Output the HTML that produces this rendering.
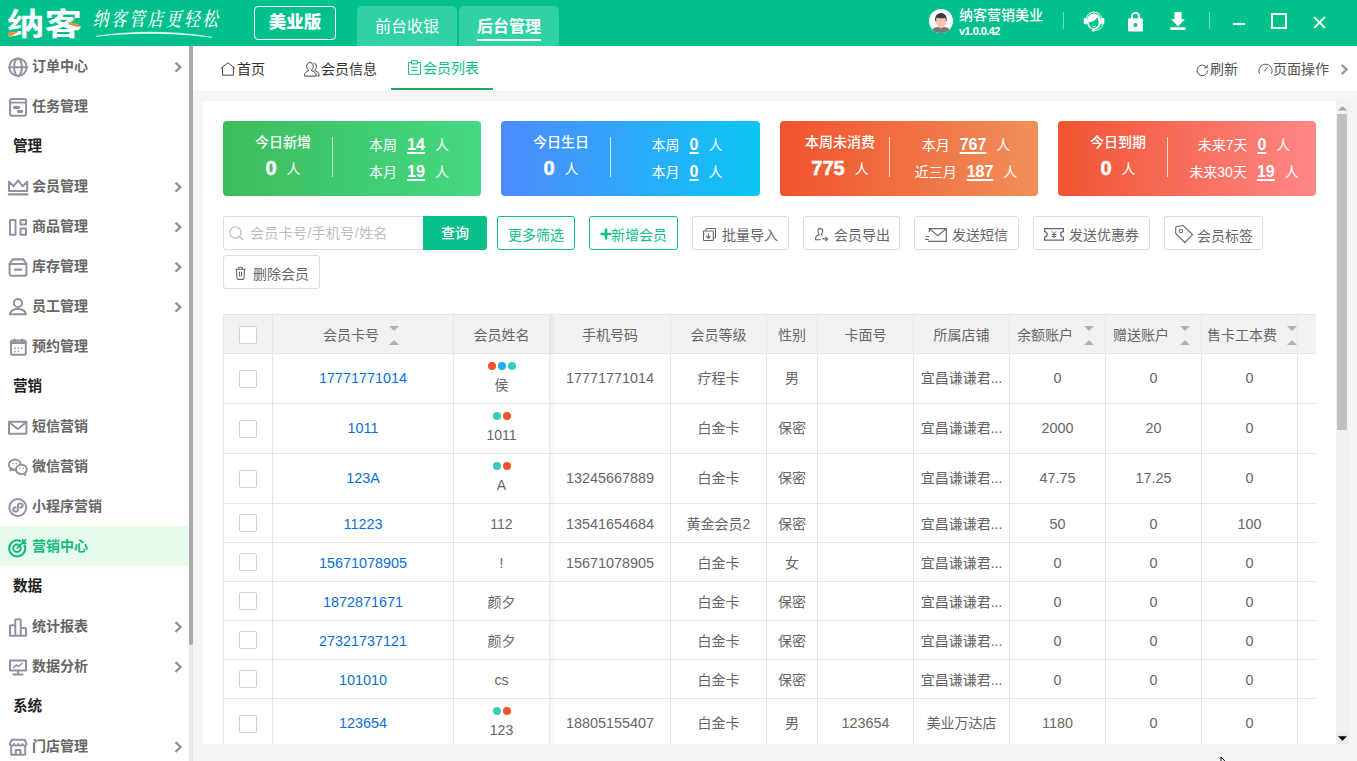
<!DOCTYPE html>
<html lang="zh-CN">
<head>
<meta charset="utf-8">
<title>纳客营销美业 - 会员列表</title>
<style>
*{box-sizing:border-box;margin:0;padding:0}
html,body{width:1357px;height:761px;overflow:hidden;background:#f5f5f5}
body{font-family:"Liberation Sans","Noto Sans CJK SC",sans-serif;font-size:14px;color:#666;position:relative}
.abs{position:absolute}
svg{display:block;overflow:visible}

/* ---------- top header ---------- */
#hdr{position:absolute;left:0;top:0;width:1357px;height:46px;background:#00c08b;color:#fff}
#logo{position:absolute;left:7px;top:7px;font-size:36px;line-height:40px;font-weight:700;letter-spacing:0;color:#fff;white-space:nowrap;transform-origin:0 0;transform:scale(1.04,.86)}
#slogan{position:absolute;left:91px;top:11px;font-size:16px;line-height:24px;color:#fff;font-family:"Liberation Serif","Noto Serif CJK SC",serif;font-weight:500;white-space:nowrap;letter-spacing:2.8px;transform:skewX(-12deg) scale(.97,1.22);transform-origin:0 100%}
#ver{position:absolute;left:254px;top:6px;width:82px;height:34px;border:1px solid #fff;border-radius:4px;font-size:17.5px;font-weight:900;line-height:31px;text-align:center;color:#fff}
.toptab{position:absolute;top:6px;height:40px;width:100px;background:#30d1a5;border-radius:5px 5px 0 0;font-size:16px;line-height:41px;text-align:center;color:#fff}
#tt1{left:357px}
#tt2{left:459px;font-weight:700}
#tt2 i{position:absolute;left:18px;right:18px;top:33px;height:2px;background:#fff}
#uname{position:absolute;left:959px;top:6px;font-size:14px;line-height:18px;font-weight:500;white-space:nowrap}
#uver{position:absolute;left:959px;top:24px;font-size:11px;line-height:14px;font-weight:700;white-space:nowrap;letter-spacing:-.55px}
.vsep{position:absolute;top:12px;width:1px;height:17px;background:rgba(255,255,255,.45)}

/* ---------- sidebar ---------- */
#side{position:absolute;left:0;top:46px;width:189px;height:715px;background:#fff;overflow:hidden}
#sbar{position:absolute;left:189px;top:46px;width:4px;height:715px;background:#e8e8e8}
#sbar i{position:absolute;left:0;top:0;width:4px;height:599px;background:#a9a8ab;border-radius:0 0 2px 2px}
.mi{position:absolute;left:0;width:189px;height:40px;line-height:40px;font-size:14px;font-weight:700;color:#666;padding-left:32px;white-space:nowrap}
.mi svg{position:absolute;left:8px;top:10px;width:20px;height:20px;stroke:#9391a1;fill:none;stroke-width:2;stroke-linecap:round;stroke-linejoin:round}
.mi .chev{left:173px;top:15px;width:10px;height:12px;stroke-width:2.3;stroke-linecap:butt;stroke-linejoin:miter}
.mi.on{background:#e6fceb;color:#10b981}
.mi.on svg{stroke:#10b981;top:11px}
.mt{position:absolute;left:13px;width:160px;height:40px;line-height:40px;font-size:14.6px;font-weight:700;color:#222}

/* ---------- page tabs ---------- */
#tabs{position:absolute;left:193px;top:46px;width:1164px;height:45px;background:#fff}
.pt{position:absolute;top:0;height:45px;line-height:46px;font-size:14px;color:#333;white-space:nowrap}
.pt svg{position:absolute;top:15px;stroke:#444;fill:none;stroke-width:1}
.pt.on{color:#04bf88}
.pt.on svg{stroke:#04bf88}
#ptline{position:absolute;left:198px;top:42px;width:102px;height:2px;background:#21ab5e}

/* ---------- main card ---------- */
#card{position:absolute;left:203px;top:101px;width:1133px;height:643px;background:#fff;border-radius:2px 0 0 0;overflow:hidden}
#vtrack{position:absolute;left:1336px;top:101px;width:13px;height:643px;background:#f1f1f1}
#vthumb{position:absolute;left:1px;top:13px;width:10px;height:316px;background:#c1c1c1}

/* ---------- stat cards ---------- */
.st{position:absolute;top:20px;height:75px;width:258px;border-radius:4px;color:#fff;font-size:14px}
.st .l{position:absolute;left:10px;top:0;width:100px;text-align:center;white-space:nowrap}
.st .l .t{position:absolute;left:-20px;right:-20px;top:11px;line-height:20px;font-weight:500}
.st .l .n{position:absolute;left:-20px;right:-20px;top:33px;line-height:28px}
.st .l .n b{font-size:20px;font-weight:700;margin-right:10px;vertical-align:-1px;-webkit-text-stroke:.5px #fff}
.st .dv{position:absolute;left:109px;top:16px;width:1px;height:40px;background:rgba(255,255,255,.75)}
.st .r{position:absolute;left:100px;width:172px;text-align:center;white-space:nowrap;line-height:26px;height:26px}
.st .r1{top:11px}
.st .r2{top:38px}
.st .r b{font-size:16px;font-weight:700;margin:0 10px;text-decoration:underline;text-underline-offset:1.5px;text-decoration-thickness:1.5px}
/* ---------- toolbar ---------- */
.btn{position:absolute;top:115px;height:34px;border:1px solid #dcdcdc;border-radius:3px;background:#fff;color:#666;font-size:14px;line-height:32px;white-space:nowrap}
.btn span{position:absolute;top:2px}
.btn svg{position:absolute;stroke:#666;fill:none;stroke-width:1.1}
.btn.g{border-color:#0dbf8c;color:#0dbf8c}
#q{position:absolute;left:20px;top:115px;width:200px;height:34px;border:1px solid #dcdcdc;border-right:0;border-radius:3px 0 0 3px;background:#fff;color:#bdbdbd;font-size:14px;line-height:32px;padding-left:26px;white-space:nowrap;letter-spacing:.35px}
#q svg{position:absolute;left:5px;top:9px;width:15px;height:15px;stroke:#c4c4c4;fill:none;stroke-width:1.4}
#qb{position:absolute;left:220px;top:115px;width:64px;height:34px;background:#08bf8b;border-radius:0 3px 3px 0;color:#fff;font-size:14px;font-weight:500;line-height:35px;text-align:center}

/* ---------- table ---------- */
#tb{position:absolute;left:20px;top:213px;width:1093px;height:440px;border-left:1px solid #e6e6e6;border-top:1px solid #e6e6e6;overflow:hidden;color:#666;font-size:14px}
.tr{display:flex;width:1200px}
.tr>div{flex:none;position:relative;border-right:1px solid #e6e6e6;border-bottom:1px solid #e6e6e6;text-align:center;white-space:nowrap;overflow:hidden}
.th>div{background:#f2f2f2}
.h39{height:39px;line-height:40px}
.th.h39{line-height:41px}
.h50{height:50px;line-height:49px}
.c0{width:49px}.c1{width:181px}.c2{width:96px}.c3{width:121px}.c4{width:96px}.c5{width:51px}.c6{width:96px}.c7{width:96px}.c8{width:96px}.c9{width:96px}.c10{width:96px}.c11{width:60px}
.cb{position:absolute;left:15px;width:18px;height:18px;border:1px solid #d2d2d2;border-radius:2px;background:#fff}
.h39 .cb{top:10px}
.h50 .cb{top:16px}
.th .cb{top:11px}
.c1 a{color:#0a6fd8;text-decoration:none}
.tr:not(.th) .c1,.tr:not(.th) .c3,.tr:not(.th) .c6,.tr:not(.th) .c8,.tr:not(.th) .c9,.tr:not(.th) .c10{font-size:14.4px}
.so{position:absolute;top:0;width:10px;height:38px}
.so:before,.so:after{content:"";position:absolute;left:0;border-left:5px solid transparent;border-right:5px solid transparent}
.so:before{top:11px;border-top:5px solid #b2b2b2}
.so:after{top:24.500px;border-bottom:5px solid #b2b2b2}
.dots{position:absolute;left:0;right:0;top:8px;height:8px;line-height:0;font-size:0}
.dots i{display:inline-block;width:8px;height:8px;border-radius:50%;margin:0 1px}
.dr{background:#f4542d}.db{background:#1ab0f6}.dt{background:#38cdb8}
.nm{position:absolute;left:0;right:0;top:20px;line-height:22px}
#fsh{position:absolute;left:326px;top:0;width:6px;height:440px;background:linear-gradient(90deg,rgba(0,0,0,.05),rgba(0,0,0,0))}
.thl{text-align:left!important}
</style>
</head>
<body>

<!-- ================= HEADER ================= -->
<div id="hdr">
  <div id="logo">纳客</div>
  <div id="slogan">纳客管店更轻松</div>
  <svg class="abs" style="left:94px;top:30px;width:120px;height:9px" viewBox="0 0 120 9"><path d="M2 6.400C30 1.200 80 0 118 7.400 80 1.800 30 2.800 2 6.400Z" fill="#fff" stroke="#fff" stroke-width=".500"/></svg>
  <svg class="abs" style="left:6px;top:20px;width:76px;height:18px" viewBox="0 0 76 18"><path d="M2 12.600c3-.200 6.500-1 10.200-.900-2.600 1.900-6 4.200-9.300 5.100C2 15.500 1.800 14 2 12.600Z" fill="#f58f3e"/><path d="M61 1.800c4 .800 8.600 1.600 12.200 2.200.300 1.100 0 2.400-.900 3.300C68 6.500 64 4.600 61 1.800Z" fill="#f58f3e"/></svg>
  <div id="ver">美业版</div>
  <div class="toptab" id="tt1">前台收银</div>
  <div class="toptab" id="tt2">后台管理<i></i></div>
  <div id="uname">纳客营销美业</div>
  <div id="uver">v1.0.0.42</div>
  <div class="vsep" style="left:1063px"></div>
  <div class="vsep" style="left:1209px"></div>
  <!-- avatar -->
  <svg class="abs" style="left:929px;top:9px;width:24px;height:24px" viewBox="0 0 24 24">
    <defs><clipPath id="avc"><circle cx="12" cy="12" r="12"/></clipPath></defs>
    <circle cx="12" cy="12" r="12" fill="#fff"/>
    <g clip-path="url(#avc)">
      <path d="M3.600 24v-2.600c0-2 2.200-3.100 5.600-3.300l2.800.900 2.800-.900c3.400.200 5.600 1.300 5.600 3.300V24Z" fill="#777"/>
      <path d="M10.300 15.500h3.400v3.100l-1.700.900-1.700-.900Z" fill="#f4b19d"/>
      <ellipse cx="12" cy="13" rx="5.100" ry="5.300" fill="#f9c0ae"/>
      <path d="M6.300 12.400C5.400 7.600 7.700 4 12.100 4c4.300 0 6.200 3.600 5.400 8.400l-.700-.400c.100-1.300-.300-2.400-.800-3.100-2.400.700-5.800.600-8.200-.200-.400.800-.700 2-.600 3.300Z" fill="#3a3a3a"/>
    </g>
  </svg>
  <!-- headset -->
  <svg class="abs" style="left:1083px;top:10px;width:22px;height:22px" viewBox="0 0 22 22">
    <path d="M3.400 8.200A7.800 7.800 0 0 1 18.600 8.200" fill="none" stroke="#fff" stroke-width="1"/>
    <path d="M4 12.200C3.600 6.800 7 3.600 11 3.600s7.400 3.200 7 8.600c-.200 4.400-3.400 7-7 7s-6.800-2.600-7-7Z" fill="#fff"/>
    <path d="M5.600 12.400c2.600-.400 6-1 7.900-4.100.400-.700 1.100-.500 1.300.300.500 1.500.900 3.100.800 4.500-.300 3.200-2.400 5.100-4.700 5.100-2.600 0-5-2.300-5.300-5.800Z" fill="#00c08b"/>
    <path d="M9.200 15.900c1.100 1 2.600 1 3.700 0" fill="none" stroke="#fff" stroke-width=".800" stroke-linecap="round"/>
    <rect x=".700" y="8" width="3.200" height="6.200" rx="1.200" fill="#fff"/>
    <rect x="18.100" y="8" width="3.200" height="6.200" rx="1.200" fill="#fff"/>
    <path d="M19.700 13.800c0 4-4 6.400-8.300 6.500" fill="none" stroke="#fff" stroke-width="1"/>
    <ellipse cx="10.600" cy="20.300" rx="1.700" ry="1.200" fill="#fff"/>
  </svg>
  <!-- lock -->
  <svg class="abs" style="left:1127px;top:11px;width:17px;height:21px" viewBox="0 0 17 21">
    <path d="M4.900 8V5.400a3.600 3.600 0 0 1 7.200 0V8" fill="none" stroke="#fff" stroke-width="1.700"/>
    <rect x="1" y="7.300" width="15" height="13.100" rx="1.200" fill="#fff"/>
    <circle cx="8.500" cy="13.900" r="2" fill="#00c08b"/>
  </svg>
  <!-- download -->
  <svg class="abs" style="left:1170px;top:11px;width:16px;height:20px" viewBox="0 0 16 20">
    <path d="M4.400 1.800a.800.800 0 0 1 .800-.800h5.600a.800.800 0 0 1 .800.800V8.300h3.300L8 15.400 1.100 8.300h3.300Z" fill="#fff"/>
    <path d="M1.500 17.700h13" stroke="#fff" stroke-width="2.800" stroke-linecap="round"/>
  </svg>
  <!-- window controls -->
  <div class="abs" style="left:1233px;top:23px;width:12px;height:2px;background:#fff"></div>
  <div class="abs" style="left:1271px;top:13px;width:16px;height:16px;border:2px solid #fffef0"></div>
  <svg class="abs" style="left:1313px;top:16px;width:13px;height:13px" viewBox="0 0 13 13"><path d="M1.200 1.200 11.800 11.800M11.800 1.200 1.200 11.800" stroke="#fff" stroke-width="1.900"/></svg>
</div>

<!-- ================= SIDEBAR ================= -->
<div id="side">
  <div class="mi" style="top:0">订单中心
    <svg viewBox="0 0 20 20"><circle cx="10" cy="11.2" r="8.7"/><ellipse cx="10" cy="11.2" rx="3.9" ry="8.7"/><path d="M1.3 11.2h17.4"/></svg>
    <svg class="chev" viewBox="0 0 10 12"><path d="M2.5 1.7 L7.4 6.2 L2.5 10.7"/></svg>
  </div>
  <div class="mi" style="top:40px">任务管理
    <svg viewBox="0 0 20 20"><rect x="2.100" y="2.900" width="16" height="16.900" rx="1.800"/><path d="M2.100 6.700h16" stroke-width="1.800"/><path d="M6.300 11.500h4.600M10.300 15.500h3.600" stroke-width="2.800"/></svg>
  </div>
  <div class="mt" style="top:80px">管理</div>
  <div class="mi" style="top:120px">会员管理
    <svg viewBox="0 0 20 20"><path d="M1 5.8V15h18.2V5.8l-4.6 4.4L10.1 4.4 5.6 10.2Z"/><path d="M0.8 18.4h18.6" stroke-width="2.2"/></svg>
    <svg class="chev" viewBox="0 0 10 12"><path d="M2.5 1.7 L7.4 6.2 L2.5 10.7"/></svg>
  </div>
  <div class="mi" style="top:160px">商品管理
    <svg viewBox="0 0 20 20"><rect x="2" y="4.1" width="5.5" height="14.6"/><rect x="12.5" y="4.1" width="5.5" height="4.4"/><rect x="12.5" y="12.4" width="5.5" height="6.3"/></svg>
    <svg class="chev" viewBox="0 0 10 12"><path d="M2.5 1.7 L7.4 6.2 L2.5 10.7"/></svg>
  </div>
  <div class="mi" style="top:200px">库存管理
    <svg viewBox="0 0 20 20"><path d="M5 3.4h10" stroke-width="2.4"/><path d="M4.4 3.6 1.6 7.8v9.9a2 2 0 0 0 2 2h12.8a2 2 0 0 0 2-2V7.8l-2.8-4.2"/><path d="M1.6 8h16.8"/><path d="M7 13.6h6" stroke-width="2.4"/></svg>
    <svg class="chev" viewBox="0 0 10 12"><path d="M2.5 1.7 L7.4 6.2 L2.5 10.7"/></svg>
  </div>
  <div class="mi" style="top:240px">员工管理
    <svg viewBox="0 0 20 20"><circle cx="9.9" cy="7" r="4.1"/><path d="M1.8 18.2c1-3.6 3.9-5.2 8.1-5.2s7.100 1.600 8.100 5.200Z"/></svg>
    <svg class="chev" viewBox="0 0 10 12"><path d="M2.5 1.7 L7.4 6.2 L2.5 10.7"/></svg>
  </div>
  <div class="mi" style="top:280px">预约管理
    <svg viewBox="0 0 20 20"><rect x="3" y="4.600" width="14.800" height="14.200" rx="1.500"/><path d="M3 6.800h14.800" stroke-width="2.600"/><path d="M6.600 3.400v2M14.200 3.400v2" stroke-width="2"/><path d="M6.300 12.200h1.400M9.700 12.200h1.400M13.100 12.200h1.400M6.300 15.500h1.400M9.700 15.500h1.400" stroke-width="1.600" stroke-linecap="butt"/></svg>
  </div>
  <div class="mt" style="top:320px">营销</div>
  <div class="mi" style="top:360px">短信营销
    <svg viewBox="0 0 20 20"><rect x="1" y="5.800" width="17.400" height="12"/><path d="M1.200 6.200 9.700 13l8.500-6.800"/></svg>
  </div>
  <div class="mi" style="top:400px">微信营销
    <svg viewBox="0 0 20 20" stroke-width="1.300" style="top:11px"><path d="M7.600 12.700a5.900 5.100 0 1 1 4.900-6.300"/><path d="M7.600 12.700c-1.200.2-2.300 0-3.100-.4L2.300 13.400l.6-2.100"/><path d="M13.400 7.800c3 0 5.400 2.100 5.400 4.700 0 1.500-.8 2.800-2 3.700l.4 1.700-1.900-1c-.6.200-1.200.3-1.900.3-3 0-5.400-2.100-5.400-4.700s2.400-4.700 5.400-4.700Z"/><path d="M4.800 6.600h.1M8.200 6.600h.1M11.600 11.300h.1M15.100 11.300h.1" stroke-width="1.500"/></svg>
  </div>
  <div class="mi" style="top:440px">小程序营销
    <svg viewBox="0 0 20 20" stroke-width="1.400"><circle cx="9.800" cy="11.500" r="8.400"/><path d="M9.900 13.500a2.350 2.100 0 1 1-2.350-2.100M9.900 13.500V9.500a2.350 2.100 0 1 1 2.350 2.100"/></svg>
  </div>
  <div class="mi on" style="top:480px">营销中心
    <svg viewBox="0 0 20 20" stroke-width="2.100"><path d="M16.500 8.200a8 8 0 1 1-4.300-4.200"/><circle cx="9" cy="11.300" r="3.700"/><path d="M9.200 11.100 17.600 2.900M14.600 2.900l.2 3 3 .2" stroke-width="1.800"/></svg>
  </div>
  <div class="mt" style="top:520px">数据</div>
  <div class="mi" style="top:560px">统计报表
    <svg viewBox="0 0 20 20"><path d="M2 19.700V10.200a1 1 0 0 1 1-1h4.300M7.300 19.700V4.200a1 1 0 0 1 1-1h3.400a1 1 0 0 1 1 1V19.700M12.700 12h4.300a1 1 0 0 1 1 1v6.700M1.800 19.700h16.400"/></svg>
    <svg class="chev" viewBox="0 0 10 12"><path d="M2.500 1.200 L7.600 6 L2.500 10.800"/></svg>
  </div>
  <div class="mi" style="top:600px">数据分析
    <svg viewBox="0 0 20 20"><rect x="2" y="4.400" width="16" height="10.200"/><path d="M10 14.600v3.600M5.400 18.400h9.200" /><path d="M5.600 11.700 8.400 8.700l2.200 1.900 3.600-3.400" stroke-width="1.400"/></svg>
    <svg class="chev" viewBox="0 0 10 12"><path d="M2.500 1.200 L7.600 6 L2.500 10.800"/></svg>
  </div>
  <div class="mt" style="top:640px">系统</div>
  <div class="mi" style="top:680px">门店管理
    <svg viewBox="0 0 20 20"><path d="M3.800 3.800h12.800l2 4.200a2.150 2.150 0 0 1-4.200 0a2.150 2.150 0 0 1-4.200 0a2.150 2.150 0 0 1-4.200 0a2.150 2.150 0 0 1-4.200 0Z"/><path d="M3.200 10.500v8.300h14v-8.300M7.800 18.800v-4.900h4.600v4.900"/></svg>
    <svg class="chev" viewBox="0 0 10 12"><path d="M2.500 1.200 L7.600 6 L2.500 10.800"/></svg>
  </div>
</div>
<div id="sbar"><i></i></div>

<!-- ================= PAGE TABS ================= -->
<div id="tabs">
  <div class="pt" style="left:44px">首页
    <svg style="left:-17px;top:16px;width:16px;height:14px" viewBox="0 0 16 14"><path d="M0.800 6.400 8 0.800l7.200 5.600M2.600 5.200v8h10.800v-8"/></svg>
  </div>
  <div class="pt" style="left:128px">会员信息
    <svg style="left:-17px;top:16px;width:16px;height:15px" viewBox="0 0 16 15"><path d="M6 0.600c2 0 3.300 1.500 3.300 3.700 0 1.700-.8 3-1.600 3.600v1c2.600.8 4.600 1.800 4.600 4.300v.9H.600v-.9c0-2.500 1.500-3.500 3.700-4.300v-1C3.500 7.300 2.700 6 2.700 4.300 2.700 2.100 4 .600 6 .600Z"/><path d="M9.600 1c1.700.1 2.800 1.500 2.800 3.500 0 1.600-.7 2.700-1.400 3.300v.9c2.300.8 4 1.700 4 4v1.400h-1.600"/></svg>
  </div>
  <div class="pt on" style="left:230px;line-height:44px">会员列表
    <svg style="left:-15px;top:14px;width:13px;height:15px" viewBox="0 0 13 15"><path d="M3.600 2.500H.600v11.800h11.800V2.500H9.400M3.600.700h5.800v3.200H3.600ZM3.400 7.300h6.200M3.400 10.400h6.200"/></svg>
  </div>
  <div id="ptline"></div>
  <div class="pt" style="left:1017px;color:#555">刷新
    <svg style="left:-14px;top:18px;width:13px;height:12px;stroke:#555" viewBox="0 0 13 12"><path d="M10.800 3.600A5.300 5.300 0 1 0 11.600 6.400M8.200 3.800h3V.800"/></svg>
  </div>
  <div class="pt" style="left:1080px;color:#555">页面操作
    <svg style="left:-15px;top:17px;width:15px;height:11px;stroke:#555" viewBox="0 0 15 11"><path d="M1.600 10.800A6.600 6.600 0 1 1 13.400 10.800M6.400 8.200 9.600 4.400"/></svg>
  </div>
  <svg class="abs" style="left:1147px;top:18px;width:9px;height:11px;stroke:#9997a6;fill:none;stroke-width:2.300" viewBox="0 0 9 11"><path d="M1.600 0.800 6.600 5.500 1.600 10.200"/></svg>
</div>

<!-- ================= MAIN CARD ================= -->
<div id="card">
  <!-- stat cards -->
  <div class="st" style="left:20px;background:linear-gradient(90deg,#3dbc5d,#44d982)">
    <div class="l"><div class="t">今日新增</div><div class="n"><b>0</b>人</div></div><div class="dv"></div>
    <div class="r r1">本周<b>14</b>人</div><div class="r r2">本月<b>19</b>人</div>
  </div>
  <div class="st" style="left:298px;width:259px;background:linear-gradient(90deg,#4e8afe,#0cc7f3)">
    <div class="l"><div class="t">今日生日</div><div class="n"><b>0</b>人</div></div><div class="dv"></div>
    <div class="r r1">本周<b>0</b>人</div><div class="r r2">本月<b>0</b>人</div>
  </div>
  <div class="st" style="left:577px;background:linear-gradient(90deg,#f0532f,#f08f5a)">
    <div class="l"><div class="t">本周未消费</div><div class="n"><b>775</b>人</div></div><div class="dv"></div>
    <div class="r r1">本月<b>767</b>人</div><div class="r r2">近三月<b>187</b>人</div>
  </div>
  <div class="st" style="left:855px;background:linear-gradient(90deg,#f05432,#ff8786)">
    <div class="l"><div class="t">今日到期</div><div class="n"><b>0</b>人</div></div><div class="dv"></div>
    <div class="r r1">未来7天<b>0</b>人</div><div class="r r2">未来30天<b>19</b>人</div>
  </div>

  <!-- toolbar -->
  <div id="q">会员卡号/手机号/姓名
    <svg viewBox="0 0 15 15"><circle cx="6.500" cy="6.500" r="5.600"/><path d="M10.600 10.600 14.300 14.300"/></svg>
  </div>
  <div id="qb">查询</div>
  <div class="btn g" style="left:294px;width:78px"><span style="left:10px">更多筛选</span></div>
  <div class="btn g" style="left:386px;width:89px"><span style="left:21px">新增会员</span>
    <svg style="left:10px;top:11px;width:12px;height:12px;stroke:#0dbf8c;stroke-width:2.600" viewBox="0 0 12 12"><path d="M6 .600v10.800M.600 6h10.800"/></svg>
  </div>
  <div class="btn" style="left:489px;width:97px"><span style="left:29px">批量导入</span>
    <svg style="left:10px;top:11px;width:13px;height:13px" viewBox="0 0 13 13"><path d="M3 2.700V1.300a.800.800 0 0 1 .800-.800h7.900a.800.800 0 0 1 .800.800v7.900a.800.800 0 0 1-.800.800h-1.400"/><rect x=".500" y="3" width="9.800" height="9.500" rx=".800"/><path d="M5.400 5.200v4.900M3.300 8.100l2.100 2.100 2.100-2.100"/></svg>
  </div>
  <div class="btn" style="left:600px;width:97px"><span style="left:30px">会员导出</span>
    <svg style="left:11px;top:11px;width:13px;height:13px" viewBox="0 0 13 13"><path d="M5.300.600c1.400 0 2.400 1.100 2.400 2.700 0 1.200-.600 2.200-1.200 2.600v.900l.900.400M4.100 5.900v.900C2.400 7.400.600 8.200.600 10.200v1.600h5.200M4.100 5.900C3.500 5.500 2.900 4.500 2.900 3.300 2.900 1.700 3.900.600 5.300.600M7.400 10.900h5.200M10.500 8.800l2.100 2.100-2.100 2.100"/></svg>
  </div>
  <div class="btn" style="left:711px;width:105px"><span style="left:37px">发送短信</span>
    <svg style="left:10px;top:11px;width:22px;height:14px" viewBox="0 0 22 14"><path d="M4.300 4V.600h17v12.800H3M4.600.900l8.200 6.800L21 .900M1 8.500h3.300M.300 11.300h3.400" stroke-width="1.200"/></svg>
  </div>
  <div class="btn" style="left:830px;width:117px"><span style="left:35px">发送优惠券</span>
    <svg style="left:10px;top:11px;width:20px;height:13px" viewBox="0 0 20 13"><path d="M.600.600h18.800v3a2.700 2.700 0 0 0 0 5.400v3.100H.600V9a2.700 2.700 0 0 0 0-5.400Z" stroke-width="1.200"/><path d="M7.900 3.300l2.100 2.600 2.100-2.600M10 5.900v4.200M7.600 6.500h4.800M7.600 8.400h4.800" stroke-width="1"/></svg>
  </div>
  <div class="btn" style="left:961px;width:99px"><span style="left:32px;top:3px">会员标签</span>
    <svg style="left:10px;top:8px;width:18px;height:18px" viewBox="0 0 18 18"><path d="M.700 2.800a1.300 1.300 0 0 1 1.100-1.300L8.200.500l9.300 9.100-7.600 8L.700 8.400Z"/><circle cx="5.900" cy="6" r="1.700"/></svg>
  </div>
  <div class="btn" style="left:20px;top:154px;width:97px"><span style="left:29px">删除会员</span>
    <svg style="left:11px;top:10px;width:11px;height:14px" viewBox="0 0 11 14"><path d="M.400 3.300h10.200M3.400 3.100c0-1.400.800-2.100 2.100-2.100s2.100.700 2.100 2.100M1.500 3.500l.500 8.600a1.300 1.300 0 0 0 1.300 1.300h4.400a1.300 1.300 0 0 0 1.300-1.300l.500-8.600M4.400 5.800l.200 4.700M6.600 5.800l-.200 4.700"/></svg>
  </div>
  <!-- table -->
  <div id="tb">
    <div class="tr th h39">
      <div class="c0"><i class="cb"></i></div>
      <div class="c1 thl"><span style="position:absolute;left:50px">会员卡号</span><i class="so" style="left:116px"></i></div>
      <div class="c2">会员姓名</div>
      <div class="c3">手机号码</div>
      <div class="c4">会员等级</div>
      <div class="c5">性别</div>
      <div class="c6">卡面号</div>
      <div class="c7">所属店铺</div>
      <div class="c8 thl"><span style="position:absolute;left:7px">余额账户</span><i class="so" style="left:74px"></i></div>
      <div class="c9 thl"><span style="position:absolute;left:7px">赠送账户</span><i class="so" style="left:74px"></i></div>
      <div class="c10 thl"><span style="position:absolute;left:5px">售卡工本费</span><i class="so" style="left:85px"></i></div>
      <div class="c11"></div>
    </div>
    <div class="tr h50">
      <div class="c0"><i class="cb"></i></div><div class="c1"><a>17771771014</a></div><div class="c2"><span class="dots"><i class="dr"></i><i class="db"></i><i class="dt"></i></span><span class="nm">侯</span></div><div class="c3">17771771014</div><div class="c4">疗程卡</div><div class="c5">男</div><div class="c6"></div><div class="c7">宜昌谦谦君...</div><div class="c8">0</div><div class="c9">0</div><div class="c10">0</div><div class="c11"></div>
    </div>
    <div class="tr h50">
      <div class="c0"><i class="cb"></i></div><div class="c1"><a>1011</a></div><div class="c2"><span class="dots"><i class="dt"></i><i class="dr"></i></span><span class="nm">1011</span></div><div class="c3"></div><div class="c4">白金卡</div><div class="c5">保密</div><div class="c6"></div><div class="c7">宜昌谦谦君...</div><div class="c8">2000</div><div class="c9">20</div><div class="c10">0</div><div class="c11"></div>
    </div>
    <div class="tr h50">
      <div class="c0"><i class="cb"></i></div><div class="c1"><a>123A</a></div><div class="c2"><span class="dots"><i class="dt"></i><i class="dr"></i></span><span class="nm">A</span></div><div class="c3">13245667889</div><div class="c4">白金卡</div><div class="c5">保密</div><div class="c6"></div><div class="c7">宜昌谦谦君...</div><div class="c8">47.75</div><div class="c9">17.25</div><div class="c10">0</div><div class="c11"></div>
    </div>
    <div class="tr h39">
      <div class="c0"><i class="cb"></i></div><div class="c1"><a>11223</a></div><div class="c2">112</div><div class="c3">13541654684</div><div class="c4">黄金会员2</div><div class="c5">保密</div><div class="c6"></div><div class="c7">宜昌谦谦君...</div><div class="c8">50</div><div class="c9">0</div><div class="c10">100</div><div class="c11"></div>
    </div>
    <div class="tr h39">
      <div class="c0"><i class="cb"></i></div><div class="c1"><a>15671078905</a></div><div class="c2">!</div><div class="c3">15671078905</div><div class="c4">白金卡</div><div class="c5">女</div><div class="c6"></div><div class="c7">宜昌谦谦君...</div><div class="c8">0</div><div class="c9">0</div><div class="c10">0</div><div class="c11"></div>
    </div>
    <div class="tr h39">
      <div class="c0"><i class="cb"></i></div><div class="c1"><a>1872871671</a></div><div class="c2">颜夕</div><div class="c3"></div><div class="c4">白金卡</div><div class="c5">保密</div><div class="c6"></div><div class="c7">宜昌谦谦君...</div><div class="c8">0</div><div class="c9">0</div><div class="c10">0</div><div class="c11"></div>
    </div>
    <div class="tr h39">
      <div class="c0"><i class="cb"></i></div><div class="c1"><a>27321737121</a></div><div class="c2">颜夕</div><div class="c3"></div><div class="c4">白金卡</div><div class="c5">保密</div><div class="c6"></div><div class="c7">宜昌谦谦君...</div><div class="c8">0</div><div class="c9">0</div><div class="c10">0</div><div class="c11"></div>
    </div>
    <div class="tr h39">
      <div class="c0"><i class="cb"></i></div><div class="c1"><a>101010</a></div><div class="c2">cs</div><div class="c3"></div><div class="c4">白金卡</div><div class="c5">保密</div><div class="c6"></div><div class="c7">宜昌谦谦君...</div><div class="c8">0</div><div class="c9">0</div><div class="c10">0</div><div class="c11"></div>
    </div>
    <div class="tr h50">
      <div class="c0"><i class="cb"></i></div><div class="c1"><a>123654</a></div><div class="c2"><span class="dots"><i class="dt"></i><i class="dr"></i></span><span class="nm">123</span></div><div class="c3">18805155407</div><div class="c4">白金卡</div><div class="c5">男</div><div class="c6">123654</div><div class="c7">美业万达店</div><div class="c8">1180</div><div class="c9">0</div><div class="c10">0</div><div class="c11"></div>
    </div>
    <div id="fsh"></div>
  </div>
</div>
<div id="vtrack"><div id="vthumb"></div>
  <svg class="abs" style="left:2px;top:5px;width:9px;height:5px" viewBox="0 0 9 5"><path d="M0 4.600 4.500.200 9 4.600Z" fill="#a3a3a3"/></svg>
  <div class="abs" style="left:0;top:631px;width:13px;height:12px;background:#e9eded"></div>
  <svg class="abs" style="left:2px;top:635px;width:9px;height:5px" viewBox="0 0 9 5"><path d="M0 .200h9L4.500 4.800Z" fill="#000"/></svg>
</div>

<!-- mouse pointer -->
<svg class="abs" style="left:1220px;top:756px;width:12px;height:19px" viewBox="0 0 12 19"><path d="M1 1v14.500l3.300-3.200 2.700 6 2-.900-2.700-5.900H11Z" fill="#fff" stroke="#000" stroke-width="1" stroke-linejoin="miter"/></svg>
</body>
</html>
